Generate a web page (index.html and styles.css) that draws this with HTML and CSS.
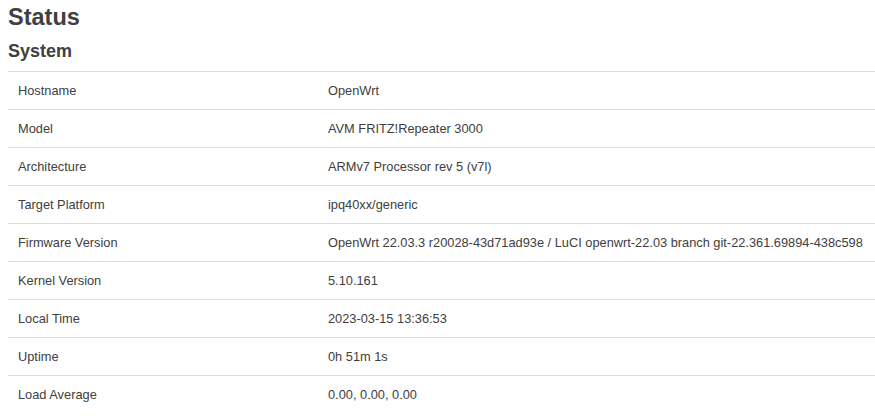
FILE: index.html
```html
<!DOCTYPE html>
<html>
<head>
<meta charset="utf-8">
<link rel="stylesheet" href="styles.css">
</head>
<body>
<div class="page">
  <h2 class="title">Status</h2>
  <h3 class="section">System</h3>
  <div class="table">
    <div class="row"><div class="key">Hostname</div><div class="val">OpenWrt</div></div>
    <div class="row"><div class="key">Model</div><div class="val">AVM FRITZ!Repeater 3000</div></div>
    <div class="row"><div class="key">Architecture</div><div class="val">ARMv7 Processor rev 5 (v7l)</div></div>
    <div class="row"><div class="key">Target Platform</div><div class="val">ipq40xx/generic</div></div>
    <div class="row"><div class="key">Firmware Version</div><div class="val">OpenWrt 22.03.3 r20028-43d71ad93e / LuCI openwrt-22.03 branch git-22.361.69894-438c598</div></div>
    <div class="row"><div class="key">Kernel Version</div><div class="val">5.10.161</div></div>
    <div class="row"><div class="key">Local Time</div><div class="val">2023-03-15 13:36:53</div></div>
    <div class="row"><div class="key">Uptime</div><div class="val">0h 51m 1s</div></div>
    <div class="row"><div class="key">Load Average</div><div class="val">0.00, 0.00, 0.00</div></div>
  </div>
</div>
</body>
</html>
```
FILE: styles.css
```css
html, body {
  margin: 0;
  padding: 0;
  background: #fff;
}
body {
  font-family: "Liberation Sans", Arial, sans-serif;
  color: #404040;
  font-size: 12.8px;
}
.page {
  padding-left: 8px;
  overflow: hidden;
}
.title {
  margin: 0;
  padding-top: 3px;
  font-size: 23.5px;
  line-height: 28px;
  font-weight: bold;
}
.section {
  margin: 0;
  padding-top: 8px;
  font-size: 18px;
  line-height: 25px;
  font-weight: bold;
  padding-bottom: 7px;
}
.table {
  display: flex;
  flex-direction: column;
}
.row {
  display: grid;
  grid-template-columns: 320px 1fr;
  border-top: 1px solid #ddd;
  height: 37px;
  align-items: center;
}
.key {
  padding-left: 10px;
}
.val {
  white-space: nowrap;
}
```
